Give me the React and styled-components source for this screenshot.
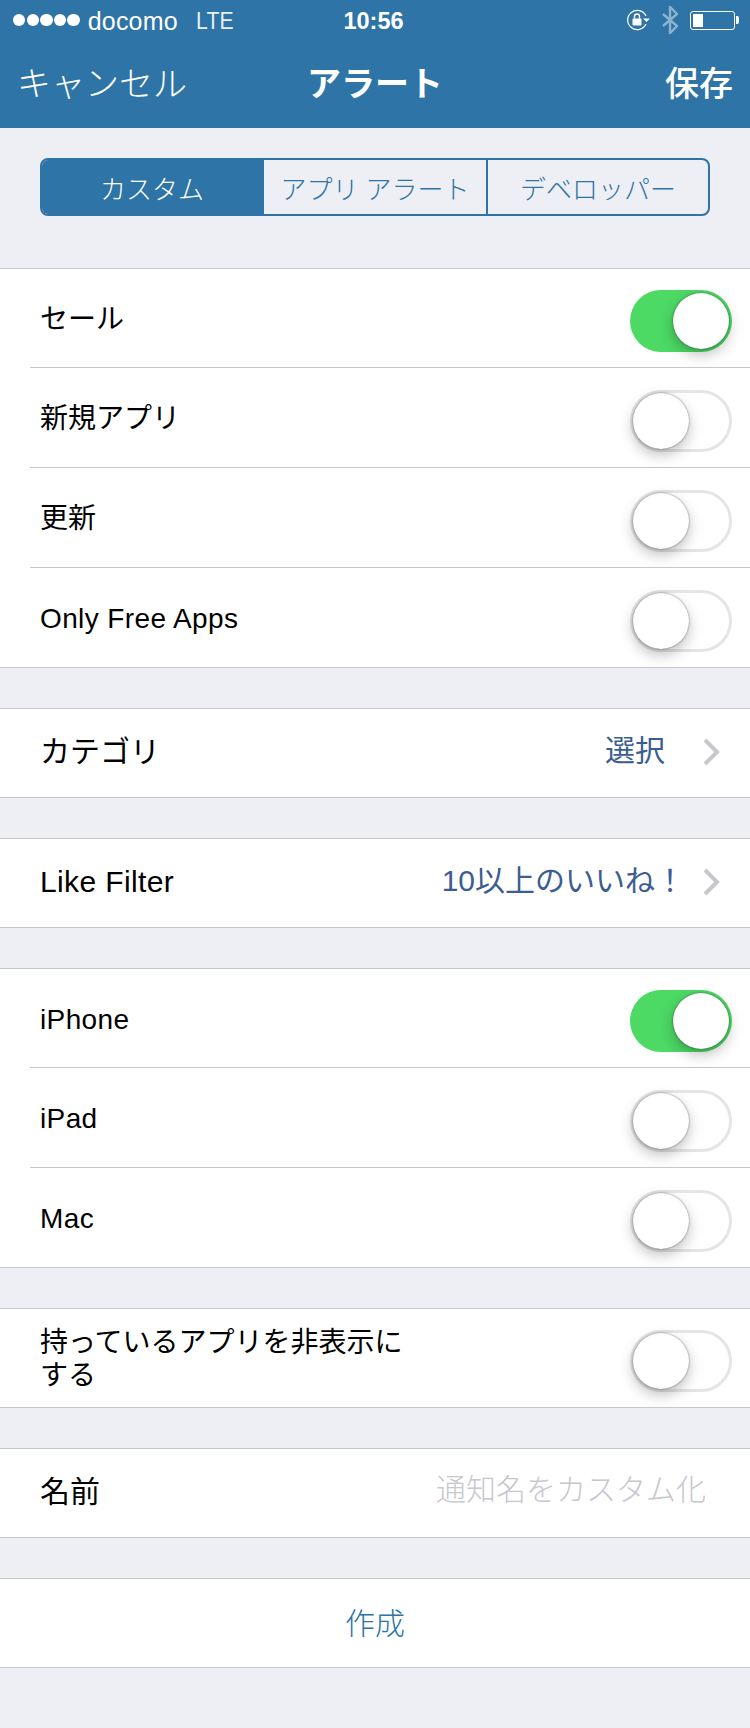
import React from "react";
import styled, { createGlobalStyle } from "styled-components";

const Global = createGlobalStyle`
  html, body {
    margin: 0;
    padding: 0;
    background: #eeeff4;
  }
  * {
    box-sizing: border-box;
  }
`;

const FONT = `"Liberation Sans", "Noto Sans CJK JP", sans-serif`;

const Page = styled.div`
  width: 750px;
  height: 1728px;
  background: #eeeff4;
  font-family: ${FONT};
  overflow: hidden;
`;

const Header = styled.header`
  height: 128px;
  background: #2e74a6;
  color: #fff;
`;

const StatusBar = styled.div`
  height: 40px;
  display: grid;
  grid-template-columns: 1fr auto 1fr;
  align-items: center;
  padding: 0 11px 0 13px;
  font-size: 25px;
`;

const StatusLeft = styled.div`
  display: flex;
  align-items: center;
  padding-top: 3px;
  font-weight: 300;
  letter-spacing: 0.2px;
`;

const Dots = styled.div`
  display: flex;
  gap: 1.2px;
  margin: -3px 8px 0 0;
`;

const Dot = styled.span`
  width: 12.4px;
  height: 12.4px;
  border-radius: 50%;
  background: #fff;
`;

const Lte = styled.span`
  margin-left: 18px;
  font-size: 23px;
  opacity: 0.9;
  transform: scaleX(0.92);
  transform-origin: left center;
`;

const Time = styled.div`
  margin-right: 5px;
  padding-top: 3px;
  font-weight: 700;
  font-size: 23.5px;
`;

const StatusRight = styled.div`
  display: flex;
  align-items: center;
  justify-content: flex-end;
  gap: 12px;
`;

const Battery = styled.div`
  display: flex;
  align-items: center;
`;

const BatteryBody = styled.div`
  width: 45px;
  height: 19px;
  border: 1px solid #fff;
  border-radius: 3px;
  padding: 2px;
  display: flex;
`;

const BatteryFill = styled.div`
  width: 10px;
  background: #fff;
`;

const BatteryNub = styled.div`
  width: 3px;
  height: 8px;
  margin-left: 1px;
  background: #fff;
  border-radius: 0 2px 2px 0;
`;

const NavBar = styled.nav`
  height: 88px;
  display: grid;
  grid-template-columns: 1fr auto 1fr;
  align-items: center;
  padding: 0 17px 6px;
  font-size: 34px;
`;

const NavCancel = styled.div`
  font-weight: 300;
`;

const NavTitle = styled.div`
  font-weight: 700;
`;

const NavSave = styled.div`
  font-weight: 500;
  text-align: right;
`;

const Segments = styled.div`
  display: grid;
  grid-template-columns: 220px 224px 1fr;
  height: 58px;
  margin: 30px 40px 52px;
  border: 2px solid #2e74a6;
  border-radius: 8px;
  overflow: hidden;
`;

const Segment = styled.div`
  display: flex;
  align-items: center;
  justify-content: center;
  font-size: 26px;
  font-weight: 300;
  white-space: pre;
  color: ${(p) => (p.$active ? "#fff" : "#2e74a6")};
  background: ${(p) => (p.$active ? "#2e74a6" : "transparent")};
  & + & {
    border-left: 2px solid #2e74a6;
  }
`;

const Group = styled.section`
  background: #fff;
  border-top: 1px solid #c8c7cc;
  border-bottom: 1px solid #c8c7cc;
  margin-bottom: 40px;
`;

const Row = styled.div`
  height: ${(p) => p.$height || 98}px;
  margin-left: 30px;
  padding: 0 18px 0 10px;
  display: flex;
  align-items: center;
  justify-content: space-between;
  color: #000;
  & + & {
    box-sizing: content-box;
    height: 99px;
    border-top: 1px solid #c8c7cc;
  }
`;

const Label = styled.div`
  line-height: 33px;
  font-size: ${(p) => (p.$large ? 30 : 28)}px;
  letter-spacing: ${(p) => (p.$latin ? 0.38 : 0)}px;
  width: ${(p) => p.$width || "auto"};
  padding: ${(p) => (p.$large ? "0 0 4px" : "2px 0 0")};
`;

const Value = styled.div`
  display: flex;
  align-items: center;
  color: #3b5d92;
  font-size: 30px;
  line-height: 32px;
  padding: 0 12px 2px 0;
`;

const ValueText = styled.span`
  margin: 0 ${(p) => p.$gap}px 2px 0;
`;

const Placeholder = styled.div`
  color: #c7c7cd;
  font-size: 30px;
  line-height: 32px;
  font-weight: 300;
  padding: 0 26px 6px 0;
`;

const CreateButton = styled.div`
  height: 88px;
  padding-top: 2px;
  display: flex;
  align-items: center;
  justify-content: center;
  font-size: 30px;
  line-height: 32px;
  font-weight: 300;
  color: #2e74a6;
`;

const Track = styled.div`
  width: 102px;
  height: 62px;
  margin-top: 6px;
  border-radius: 31px;
  display: flex;
  align-items: center;
  justify-content: ${(p) => (p.$on ? "flex-end" : "flex-start")};
  background: ${(p) => (p.$on ? "#4cd964" : "#fff")};
  border: ${(p) => (p.$on ? "none" : "3px solid #e5e5e5")};
  padding: ${(p) => (p.$on ? "0 3px" : "0")};
`;

const Knob = styled.div`
  flex: none;
  width: 56px;
  height: 56px;
  border-radius: 50%;
  background: #fff;
  box-shadow: 0 6px 14px rgba(0, 0, 0, 0.25), 0 0 2px rgba(0, 0, 0, 0.55);
`;

const Toggle = ({ on }) => (
  <Track $on={on}>
    <Knob />
  </Track>
);

const Chevron = () => (
  <svg width="18" height="28" viewBox="0 0 18 28" fill="none">
    <polyline points="3,2 15,14 3,26" stroke="#c7c7cc" strokeWidth="4" />
  </svg>
);

const RotationLock = () => (
  <svg width="24" height="22" viewBox="0 0 24 22" fill="none">
    <path d="M20 15 A9.6 9.6 0 1 1 20 7" stroke="#fff" strokeWidth="1.2" />
    <polygon points="17,9.5 24,9.5 20.5,13" fill="#fff" />
    <rect x="6.5" y="9.5" width="9" height="7" rx="1" fill="#fff" />
    <path d="M8.5 9.5 V7.5 a2.5 2.5 0 0 1 5 0 V9.5" stroke="#fff" strokeWidth="1.4" />
  </svg>
);

const Bluetooth = () => (
  <svg width="16" height="28" viewBox="0 0 16 28" fill="none" opacity="0.45">
    <polyline points="1,8 15,20 8,27 8,1 15,8 1,20" stroke="#fff" strokeWidth="2.4" />
  </svg>
);

export default function App() {
  return (
    <Page>
      <Global />
      <Header>
        <StatusBar>
          <StatusLeft>
            <Dots>
              <Dot />
              <Dot />
              <Dot />
              <Dot />
              <Dot />
            </Dots>
            docomo
            <Lte>LTE</Lte>
          </StatusLeft>
          <Time>10:56</Time>
          <StatusRight>
            <RotationLock />
            <Bluetooth />
            <Battery>
              <BatteryBody>
                <BatteryFill />
              </BatteryBody>
              <BatteryNub />
            </Battery>
          </StatusRight>
        </StatusBar>
        <NavBar>
          <NavCancel>キャンセル</NavCancel>
          <NavTitle>アラート</NavTitle>
          <NavSave>保存</NavSave>
        </NavBar>
      </Header>

      <Segments>
        <Segment $active>カスタム</Segment>
        <Segment>アプリ アラート</Segment>
        <Segment>デベロッパー</Segment>
      </Segments>

      <Group>
        <Row>
          <Label>セール</Label>
          <Toggle on />
        </Row>
        <Row>
          <Label>新規アプリ</Label>
          <Toggle />
        </Row>
        <Row>
          <Label>更新</Label>
          <Toggle />
        </Row>
        <Row>
          <Label $latin>Only Free Apps</Label>
          <Toggle />
        </Row>
      </Group>

      <Group>
        <Row $height={88}>
          <Label $large>カテゴリ</Label>
          <Value>
            <ValueText $gap={37}>選択</ValueText>
            <Chevron />
          </Value>
        </Row>
      </Group>

      <Group>
        <Row $height={88}>
          <Label $large $latin>Like Filter</Label>
          <Value>
            <ValueText $gap={17}>10以上のいいね！</ValueText>
            <Chevron />
          </Value>
        </Row>
      </Group>

      <Group>
        <Row>
          <Label $latin>iPhone</Label>
          <Toggle on />
        </Row>
        <Row>
          <Label $latin>iPad</Label>
          <Toggle />
        </Row>
        <Row>
          <Label $latin>Mac</Label>
          <Toggle />
        </Row>
      </Group>

      <Group>
        <Row>
          <Label $width="380px">持っているアプリを非表示にする</Label>
          <Toggle />
        </Row>
      </Group>

      <Group>
        <Row $height={88}>
          <Label $large>名前</Label>
          <Placeholder>通知名をカスタム化</Placeholder>
        </Row>
      </Group>

      <Group>
        <CreateButton>作成</CreateButton>
      </Group>
    </Page>
  );
}
